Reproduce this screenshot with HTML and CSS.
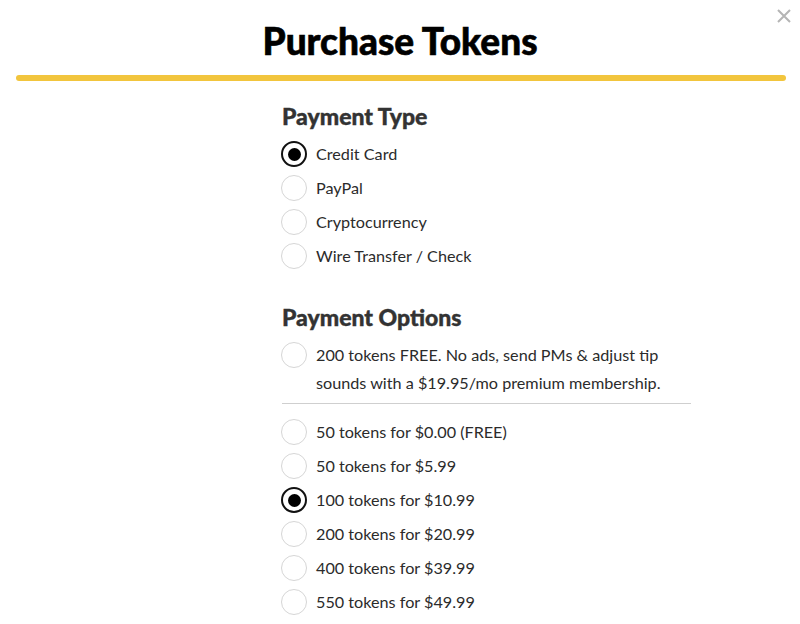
FILE: index.html
```html
<!DOCTYPE html>
<html>
<head>
<meta charset="utf-8">
<link rel="stylesheet" href="styles.css">
</head>
<body>
<div class="modal">
  <button class="close" aria-label="Close">
    <svg width="14" height="14" viewBox="0 0 14 14"><path d="M1 1L13 13M13 1L1 13" stroke="#b5b5b5" stroke-width="2" fill="none"/></svg>
  </button>
  <h1 class="title">Purchase Tokens</h1>
  <div class="bar"></div>
  <div class="content">
    <h2 class="section">Payment Type</h2>
    <ul class="options">
      <li class="opt"><span class="radio checked"></span><span class="label">Credit Card</span></li>
      <li class="opt"><span class="radio"></span><span class="label">PayPal</span></li>
      <li class="opt"><span class="radio"></span><span class="label">Cryptocurrency</span></li>
      <li class="opt"><span class="radio"></span><span class="label">Wire Transfer / Check</span></li>
    </ul>
    <h2 class="section second">Payment Options</h2>
    <ul class="options">
      <li class="opt multi"><span class="radio"></span><span class="label">200 tokens FREE. No ads, send PMs &amp; adjust tip sounds with a $19.95/mo premium membership.</span></li>
    </ul>
    <hr class="divider">
    <ul class="options">
      <li class="opt"><span class="radio"></span><span class="label">50 tokens for $0.00 (FREE)</span></li>
      <li class="opt"><span class="radio"></span><span class="label">50 tokens for $5.99</span></li>
      <li class="opt"><span class="radio checked"></span><span class="label">100 tokens for $10.99</span></li>
      <li class="opt"><span class="radio"></span><span class="label">200 tokens for $20.99</span></li>
      <li class="opt"><span class="radio"></span><span class="label">400 tokens for $39.99</span></li>
      <li class="opt"><span class="radio"></span><span class="label">550 tokens for $49.99</span></li>
    </ul>
  </div>
</div>
</body>
</html>
```
FILE: styles.css
```css
html, body {
  margin: 0;
  padding: 0;
  background: #fff;
}
body {
  font-family: Lato, "Liberation Sans", sans-serif;
  color: #333;
}
.modal {
  position: relative;
  width: 800px;
  height: 624px;
  overflow: hidden;
}
.close {
  position: absolute;
  top: 9px;
  right: 9px;
  border: 0;
  background: none;
  padding: 0;
  width: 14px;
  height: 14px;
  display: flex;
}
.title {
  margin: 0;
  padding-top: 20px;
  text-align: center;
  font-size: 37px;
  font-weight: 900;
  line-height: 42px;
  color: #000;
  -webkit-text-stroke: 0.6px #000;
}
.bar {
  margin: 13px 14px 0 16px;
  height: 6px;
  border-radius: 3px;
  background: #f2c53d;
}
.content {
  margin-left: 281px;
  width: 410px;
  padding-top: 21px;
}
.section {
  margin: 0 0 10px 1px;
  font-size: 23px;
  font-weight: 900;
  line-height: 28px;
  color: #333;
  -webkit-text-stroke: 0.4px #333;
}
.section.second {
  margin-top: 27px;
}
.options {
  list-style: none;
  margin: 0;
  padding: 0;
}
.opt {
  display: flex;
  align-items: flex-start;
  gap: 9px;
  min-height: 34px;
  font-size: 16.2px;
  line-height: 28px;
}
.opt.multi {
  min-height: 56px;
}
.radio {
  flex: none;
  box-sizing: border-box;
  width: 26px;
  height: 26px;
  margin-top: 1px;
  border-radius: 50%;
  border: 1px solid #d6d6d6;
  display: flex;
  align-items: center;
  justify-content: center;
}
.radio.checked {
  border: 2px solid #111;
}
.radio.checked::after {
  content: "";
  width: 13px;
  height: 13px;
  border-radius: 50%;
  background: #000;
}
.label {
  color: #2b2b2b;
}
.divider {
  border: 0;
  border-top: 1px solid #cfcfcf;
  margin: 6px 0 14px 1px;
  width: 409px;
}
```
